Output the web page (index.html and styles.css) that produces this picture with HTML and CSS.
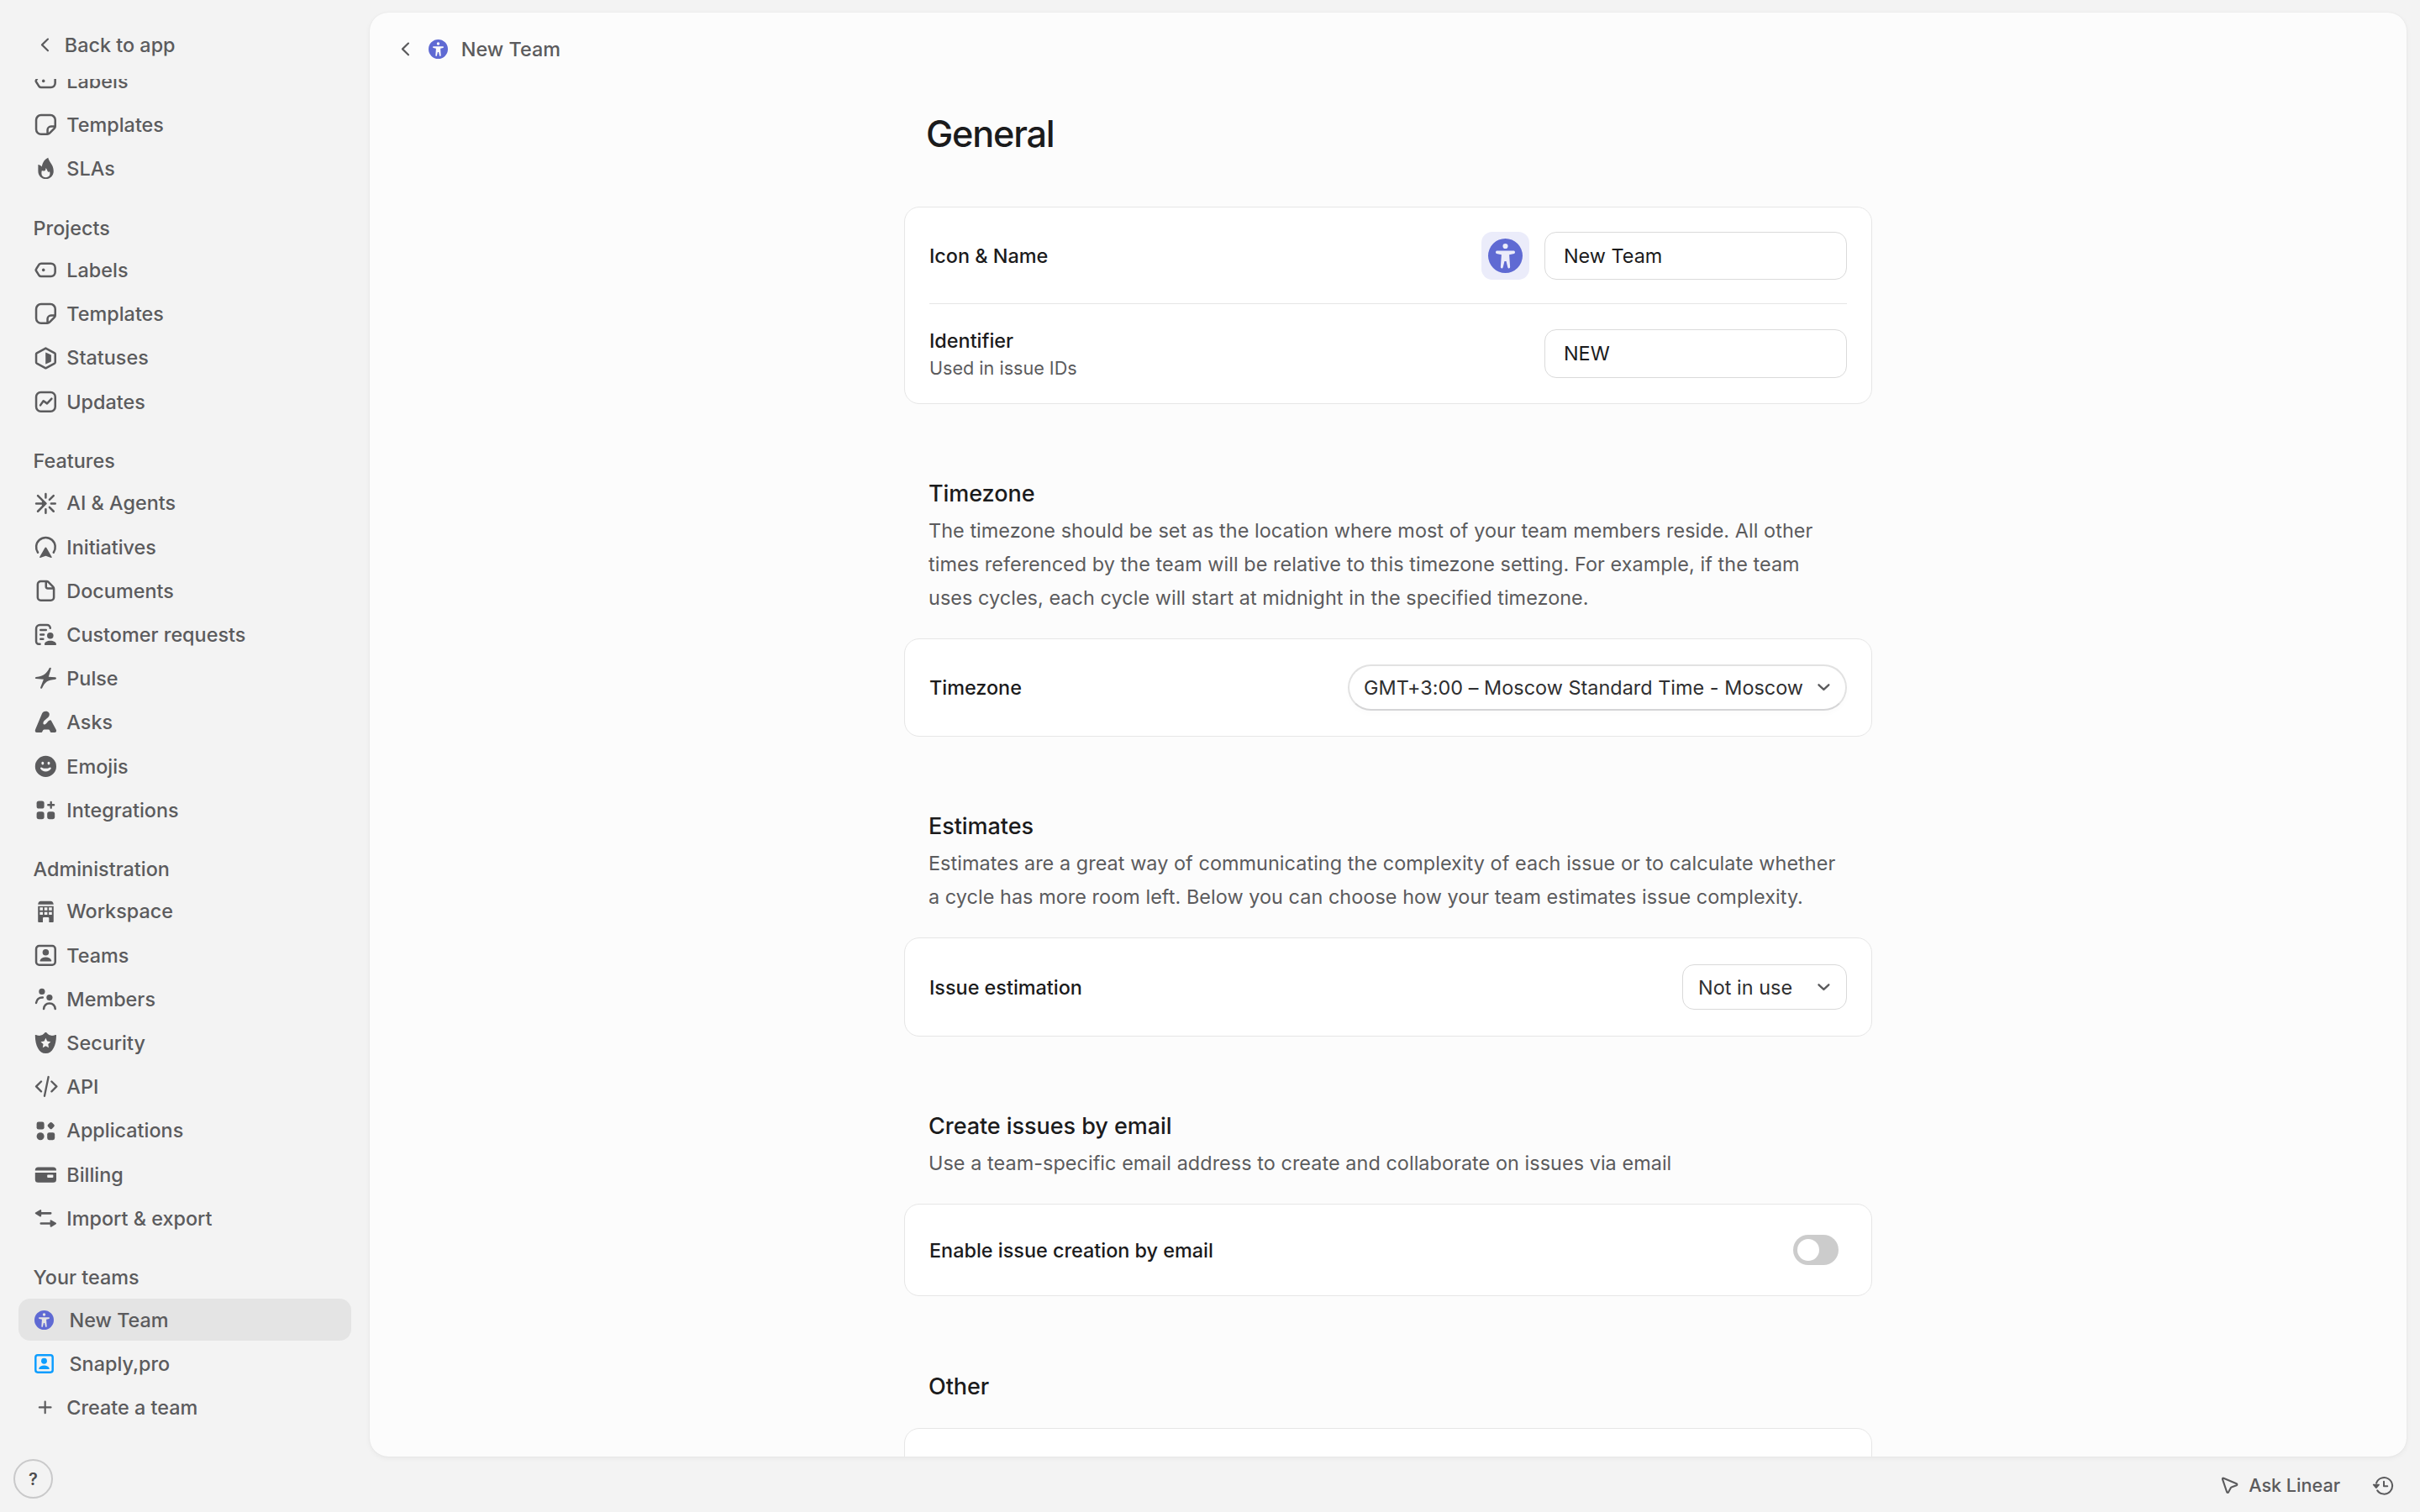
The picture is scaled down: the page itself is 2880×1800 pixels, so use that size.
FILE: index.html
```
<!DOCTYPE html>
<html lang="en">
<head>
    <meta charset="UTF-8">
    <meta name="viewport" content="width=device-width, initial-scale=1.0">
    <title>New Team</title>
    <link rel="stylesheet" href="styles.css">
</head>
<body>
    <!-- Icons used more than once -->
    <svg class="sprite" aria-hidden="true">
        <symbol id="i-label" viewBox="0 0 16 16"><path d="M5 3.75h6.5a2.75 2.75 0 0 1 2.75 2.75v3a2.75 2.75 0 0 1-2.75 2.75H5a1.8 1.8 0 0 1-1.4-.65L1.9 8.9a1.4 1.4 0 0 1 0-1.8l1.7-2.7A1.8 1.8 0 0 1 5 3.75Z" fill="none" stroke="currentColor" stroke-width="1.4"/><circle cx="6.5" cy="8" r="1" fill="currentColor"/></symbol>
        <symbol id="i-template" viewBox="0 0 16 16"><path d="M4.9 1.7h6.2a3.2 3.2 0 0 1 3.2 3.2v4.2c0 .5-.2 1-.6 1.4l-3.2 3.2c-.4.4-.9.6-1.4.6H4.9a3.2 3.2 0 0 1-3.2-3.2V4.9a3.2 3.2 0 0 1 3.2-3.2ZM14.1 9.2h-2.6a2.3 2.3 0 0 0-2.3 2.3v2.6" fill="none" stroke="currentColor" stroke-width="1.4"/></symbol>
        <symbol id="i-team" viewBox="0 0 16 16"><rect x="1.7" y="1.7" width="12.6" height="12.6" rx="2" fill="none" stroke="currentColor" stroke-width="1.4"/><circle cx="8" cy="6" r="2.1" fill="currentColor"/><path d="M4.2 11.4C4.6 9.9 6.2 9.2 8 9.2s3.4.7 3.8 2.2c.1.3-.1.6-.5.6H4.7c-.4 0-.6-.3-.5-.6Z" fill="currentColor"/></symbol>
        <symbol id="i-team-small" viewBox="1 1 14 14"><rect x="1.8" y="1.8" width="12.4" height="12.4" rx="1.6" fill="none" stroke="currentColor" stroke-width="1.5"/><circle cx="8" cy="6" r="2.1" fill="currentColor"/><path d="M4.2 11.4C4.6 9.9 6.2 9.2 8 9.2s3.4.7 3.8 2.2c.1.3-.1.6-.5.6H4.7c-.4 0-.6-.3-.5-.6Z" fill="currentColor"/></symbol>
        <symbol id="i-person" viewBox="0 0 16 16"><path fill-rule="evenodd" fill="currentColor" d="M8 0a8 8 0 1 1 0 16A8 8 0 0 1 8 0Zm0 2.3a1.2 1.2 0 1 0 0 2.4 1.2 1.2 0 0 0 0-2.4ZM4 5.7a.7.7 0 0 0-.1 1.3l2.3.5-.4 5.7c0 .8.9.9 1.1.2L7.6 10.5h.8l.7 2.9c.2.7 1.1.6 1.1-.2L9.8 7.5l2.3-.5a.7.7 0 0 0-.1-1.3Z"/></symbol>
        <symbol id="i-chevron" viewBox="0 0 16 16"><path d="M10 4.2 6.1 8l3.9 3.8" fill="none" stroke="currentColor" stroke-width="1.2" stroke-linecap="round" stroke-linejoin="round"/></symbol>
        <symbol id="i-down" viewBox="0 0 16 16"><path d="M4.7 6.3 8 9.4l3.3-3.1" fill="none" stroke="currentColor" stroke-width="1.3" stroke-linecap="round" stroke-linejoin="round"/></symbol>
    </svg>

    <aside class="sidebar">
        <a class="back"><svg class="icon"><use href="#i-chevron"/></svg>Back to app</a>

        <nav class="nav">
            <div class="nav-inner">
                <div class="group">
                    <a class="item"><svg class="icon"><use href="#i-label"/></svg>Labels</a>
                    <a class="item"><svg class="icon"><use href="#i-template"/></svg>Templates</a>
                    <a class="item"><svg class="icon" viewBox="0 0 16 16"><path fill-rule="evenodd" fill="currentColor" d="M9.6 1c.5 2.9 3.6 4.5 3.6 8.8C13.2 12.8 11 15 8.1 15S3 12.8 3 9.8V5.6c1 .2 1.9.7 2.4 1.3C6.2 3.5 7.6 1.9 9.6 1ZM8.1 7.8c-.1 1.5-.7 2.2-1.5 1.9-.5 0-.8-.1-1.2-.1-.7 3 .6 4.4 2.7 4.4s3.2-1.5 2.5-3.8c-.5.4-.9.3-1.2-.1-.4-.7-.6-1.5-1.3-2.3Z"/></svg>SLAs</a>
                </div>

                <div class="group">
                    <h3 class="group-title">Projects</h3>
                    <a class="item"><svg class="icon"><use href="#i-label"/></svg>Labels</a>
                    <a class="item"><svg class="icon"><use href="#i-template"/></svg>Templates</a>
                    <a class="item"><svg class="icon" viewBox="0 0 16 16"><path d="m8 1.4 5.9 3.2a.8.8 0 0 1 .4.7v5.4c0 .3-.1.5-.4.7L8 14.6l-5.9-3.2a.8.8 0 0 1-.4-.7V5.3c0-.3.1-.5.4-.7Z" fill="none" stroke="currentColor" stroke-width="1.4" stroke-linejoin="round"/><path d="M7.9 4.1 11.1 5.5c.3.2.5.4.5.7v3.6c0 .3-.2.5-.5.7l-3.2 1.4Z" fill="currentColor"/></svg>Statuses</a>
                    <a class="item"><svg class="icon" viewBox="0 0 16 16"><rect x="1.7" y="1.7" width="12.6" height="12.6" rx="3" fill="none" stroke="currentColor" stroke-width="1.4"/><path d="m4.5 10.2 2-2.8 2.4 1.7 3-3.2" fill="none" stroke="currentColor" stroke-width="1.4" stroke-linecap="round" stroke-linejoin="round"/></svg>Updates</a>
                </div>

                <div class="group">
                    <h3 class="group-title">Features</h3>
                    <a class="item"><svg class="icon" viewBox="0 0 16 16"><path d="M8 1.7v2.5M8 11.8v2.5M11.6 8h2.7M10.5 5.5l2.7-2.7M10.5 10.5l2.7 2.7M1.7 8H8L2.8 2.8M8 8l-5.2 5.2" fill="none" stroke="currentColor" stroke-width="1.4" stroke-linecap="round" stroke-linejoin="round"/><path d="M5.5 5.5 8.6 8l-3.1 2.5Z" fill="currentColor"/></svg>AI &amp; Agents</a>
                    <a class="item"><svg class="icon" viewBox="0 0 16 16"><path d="M2.8 11.5a6.3 6.3 0 1 1 10.4 0" fill="none" stroke="currentColor" stroke-width="1.4" stroke-linecap="round"/><path d="M7.5 8.4c.2-.5.8-.5 1 0l3.5 6c.2.4-.1.7-.5.6L8 13.8 4.5 15c-.4.1-.7-.2-.5-.6Z" fill="currentColor"/></svg>Initiatives</a>
                    <a class="item"><svg class="icon" viewBox="0 0 16 16"><path d="M4.7 1.7h3.8c.5 0 1 .2 1.4.6l3 3c.3.3.5.8.5 1.3v5.7a2 2 0 0 1-2 2H4.7a2 2 0 0 1-2-2V3.7a2 2 0 0 1 2-2ZM8.2 2v3.2c0 .7.5 1.2 1.2 1.2H13" fill="none" stroke="currentColor" stroke-width="1.4"/></svg>Documents</a>
                    <a class="item"><svg class="icon" viewBox="0 0 16 16"><path d="M4.2 14.3h-.9a1.6 1.6 0 0 1-1.6-1.6V4.1a2.4 2.4 0 0 1 2.4-2.4h4.8a2.1 2.1 0 0 1 2.1 2.1M4.6 5h3.6M4.6 8h2.1M4.6 11h1.7" fill="none" stroke="currentColor" stroke-width="1.4" stroke-linecap="round"/><circle cx="11" cy="8.8" r="2.1" fill="currentColor"/><path d="M7.2 14.6c0-1.6 1.7-2.5 3.8-2.5s4 .9 4 2.5c0 .3-.2.4-.4.4h-7c-.2 0-.4-.1-.4-.4Z" fill="currentColor"/></svg>Customer requests</a>
                    <a class="item"><svg class="icon" viewBox="0 0 16 16"><path d="M11.6 1.4c-.1-.6-.9-.6-1.2-.1C8.7 4.6 7 6.7 1.6 7.2c-.8.1-.8 1.1 0 1.2l5 .4-2.1 5.3c-.1.7.6 1.1 1.1.5C7.6 10.3 9 9.3 14.4 8.7c.8-.1.8-1.2 0-1.3L9.9 7.1Z" fill="currentColor"/></svg>Pulse</a>
                    <a class="item"><svg class="icon" viewBox="0 0 16 16"><path d="M8 1c1.9 0 3 1.5 2.2 3.1-.5 1.1-3.3 2.7-3.7 4-.4 1.3 0 1.8.9 1.6 1.3-.3 1.9-2.5 3.5-2.9.4-.1.7.2 1 .8l3 5.6c.4.9 0 1.8-1 1.8h-2c-1.4 0-.8-2-2.1-2H7.1c-1.4 0-.9 2-2.2 2H2.2C1.1 15 .7 14 1.2 12.9L5.5 2.6C5.9 1.6 6.8 1 8 1Z" fill="currentColor"/></svg>Asks</a>
                    <a class="item"><svg class="icon" viewBox="0 0 16 16"><path fill-rule="evenodd" fill="currentColor" d="M8 1a7 7 0 1 1 0 14A7 7 0 0 1 8 1ZM6 4.8c-.5 0-.8.4-.8 1s.3 1.1.8 1.1.8-.5.8-1.1-.3-1-.8-1Zm4 0c-.5 0-.8.4-.8 1s.3 1.1.8 1.1.8-.5.8-1.1-.3-1-.8-1ZM5.4 8.7c-.6-.3-1.2.2-.9.8C5.2 10.7 6.5 11.4 8 11.4s2.8-.7 3.5-1.9c.3-.6-.3-1.1-.9-.8-1.7.9-3.5.9-5.2 0Z"/></svg>Emojis</a>
                    <a class="item"><svg class="icon" viewBox="0 0 16 16"><g fill="currentColor"><rect x="2" y="2" width="5" height="5" rx="1.5"/><rect x="2" y="9" width="5" height="5" rx="1.5"/><rect x="9" y="9" width="5" height="5" rx="1.5"/></g><path d="M11.5 2.7v3.8M9.6 4.6h3.8" stroke="currentColor" stroke-width="1.3" stroke-linecap="round"/></svg>Integrations</a>
                </div>

                <div class="group">
                    <h3 class="group-title">Administration</h3>
                    <a class="item"><svg class="icon" viewBox="0 0 16 16"><path fill-rule="evenodd" fill="currentColor" d="M4.8 1h6.4c1.1 0 1.9.7 2 2.2H2.9C3 1.7 3.7 1 4.8 1ZM2.9 4.3h10.3v10.2c0 .3-.2.5-.5.5h-2.5v-2.7c0-.4-.2-.6-.6-.6H6.7c-.4 0-.6.2-.6.6V15H3.4c-.3 0-.5-.2-.5-.5ZM4.1 5.2v1.9h2V5.2Zm3 0v1.9h2V5.2Zm3 0v1.9h2V5.2Zm-6 3V10h2V8.2Zm3 0V10h2V8.2Zm3 0V10h2V8.2Z"/></svg>Workspace</a>
                    <a class="item"><svg class="icon"><use href="#i-team"/></svg>Teams</a>
                    <a class="item"><svg class="icon" viewBox="0 0 16 16"><g fill="currentColor"><circle cx="5.5" cy="3" r="2"/><circle cx="10.5" cy="7" r="2"/></g><path d="M1.7 10.5c.4-2.4 1.9-3.7 4.3-3.6M6.7 14.5c.3-2.5 1.7-3.7 3.8-3.7s3.5 1.2 3.8 3.7" fill="none" stroke="currentColor" stroke-width="1.4" stroke-linecap="round"/></svg>Members</a>
                    <a class="item"><svg class="icon" viewBox="0 0 16 16"><path fill-rule="evenodd" fill="currentColor" d="M7.5 1.3c.3-.3.7-.3 1 0 1.2 1.5 2.7 2.2 4.6 1.9.4 0 .9-.2 1.2-.4.4-.2.8 0 .7.5C14.9 9.7 12.6 15 8 15S1.1 9.7 1 3.3c-.1-.5.3-.7.7-.5.3.2.8.4 1.2.4 1.9.3 3.4-.4 4.6-1.9ZM8 4.8l-1 2.2-2.3.3 1.7 1.6L6 11.2l2-1.1 2 1.1-.4-2.3 1.7-1.6L9 7Z"/></svg>Security</a>
                    <a class="item"><svg class="icon" viewBox="0 0 16 16"><path d="M5 4.7 1.7 8 5 11.3M11.9 4.7 15.2 8l-3.3 3.3M9.8 1.7 7.2 14.3" fill="none" stroke="currentColor" stroke-width="1.3" stroke-linecap="round" stroke-linejoin="round"/></svg>API</a>
                    <a class="item"><svg class="icon" viewBox="0 0 16 16"><g fill="currentColor"><rect x="2" y="2" width="5" height="5" rx="1.3"/><rect x="9.6" y="2.6" width="3.8" height="3.8" rx="1" transform="rotate(45 11.5 4.5)"/><circle cx="4.5" cy="11.5" r="2.5"/><rect x="9" y="9" width="5" height="5" rx="1.3"/></g></svg>Applications</a>
                    <a class="item"><svg class="icon" viewBox="0 0 16 16"><path fill-rule="evenodd" fill="currentColor" d="M3 3h10a2 2 0 0 1 2 2v.3H1V5a2 2 0 0 1 2-2ZM1 6.6h14v4.6a2 2 0 0 1-2 2H3a2 2 0 0 1-2-2ZM9.5 8a.5.5 0 0 0-.5.5v1c0 .3.2.5.5.5h3c.3 0 .5-.2.5-.5v-1a.5.5 0 0 0-.5-.5Z"/></svg>Billing</a>
                    <a class="item"><svg class="icon" viewBox="0 0 16 16"><path d="M4 4.6h7.2M4.9 11.4H12" stroke="currentColor" stroke-width="1.5" stroke-linecap="round"/><path d="M1.2 4.2 4.3 2.3c.4-.2.8 0 .8.5v3.6c0 .5-.4.7-.8.5L1.2 5c-.3-.2-.3-.6 0-.8ZM14.8 11l-3.1-1.9c-.4-.2-.8 0-.8.5v3.6c0 .5.4.7.8.5l3.1-1.9c.3-.2.3-.6 0-.8Z" fill="currentColor"/></svg>Import &amp; export</a>
                </div>

                <div class="group">
                    <h3 class="group-title">Your teams</h3>
                    <a class="item team active"><svg class="icon team-purple"><use href="#i-person"/></svg>New Team</a>
                    <a class="item team"><svg class="icon team-blue"><use href="#i-team-small"/></svg>Snaply,pro</a>
                    <a class="item"><svg class="icon" viewBox="0 0 16 16"><path d="M7.6 4.2v7.6M3.8 8h7.6" stroke="currentColor" stroke-width="1.2" stroke-linecap="round"/></svg>Create a team</a>
                </div>
            </div>
        </nav>

        <button class="help">?</button>
    </aside>

    <div class="content">
        <main class="panel">
            <header class="topbar">
                <svg class="icon"><use href="#i-chevron"/></svg>
                <svg class="topbar-team"><use href="#i-person"/></svg>
                <span>New Team</span>
            </header>

            <div class="page">
                <h1>General</h1>

                <div class="card card-general">
                    <div class="row row-name">
                        <div class="label">Icon &amp; Name</div>
                        <div class="controls">
                            <button class="icon-button"><svg><use href="#i-person"/></svg></button>
                            <input class="field" type="text" value="New Team">
                        </div>
                    </div>
                    <div class="row row-id">
                        <div>
                            <div class="label">Identifier</div>
                            <div class="hint">Used in issue IDs</div>
                        </div>
                        <input class="field" type="text" value="NEW">
                    </div>
                </div>

                <section>
                    <h2>Timezone</h2>
                    <p>The timezone should be set as the location where most of your team members reside. All other times referenced by the team will be relative to this timezone setting. For example, if the team uses cycles, each cycle will start at midnight in the specified timezone.</p>
                    <div class="card card-timezone">
                        <div class="row">
                            <div class="label">Timezone</div>
                            <button class="select select-pill"><span>GMT+3:00 – Moscow Standard Time - Moscow</span><svg class="icon"><use href="#i-down"/></svg></button>
                        </div>
                    </div>
                </section>

                <section>
                    <h2>Estimates</h2>
                    <p>Estimates are a great way of communicating the complexity of each issue or to calculate whether a cycle has more room left. Below you can choose how your team estimates issue complexity.</p>
                    <div class="card card-estimates">
                        <div class="row">
                            <div class="label">Issue estimation</div>
                            <button class="select select-estimate"><span>Not in use</span><svg class="icon"><use href="#i-down"/></svg></button>
                        </div>
                    </div>
                </section>

                <section>
                    <h2>Create issues by email</h2>
                    <p>Use a team-specific email address to create and collaborate on issues via email</p>
                    <div class="card card-email">
                        <div class="row">
                            <div class="label">Enable issue creation by email</div>
                            <button class="toggle" aria-label="Enable issue creation by email"></button>
                        </div>
                    </div>
                </section>

                <section class="section-other">
                    <h2>Other</h2>
                    <div class="card card-other"></div>
                </section>
            </div>
        </main>

        <footer class="bottombar">
            <a class="ask"><svg viewBox="0 0 16 16"><path d="M1.5 2.2c-.2-.7.4-1.2 1-.9l11.7 5c.7.3.7 1.2 0 1.5L9.6 9.6c-.3.1-.5.3-.7.6l-2 3.7c-.3.7-1.3.6-1.5-.2Z" fill="none" stroke="currentColor" stroke-width="1.6" stroke-linejoin="round"/></svg>Ask Linear</a>
            <svg class="history" viewBox="0 0 16 16"><path d="M3 6.3a5.8 5.8 0 1 1 .7 5.2M8.3 5.2v3.2h2.5" fill="none" stroke="currentColor" stroke-width="1.2" stroke-linecap="round" stroke-linejoin="round"/><path d="M1 7.4h3.8L2.9 9.6Z" fill="currentColor" stroke="currentColor" stroke-linejoin="round"/></svg>
        </footer>
    </div>
</body>
</html>
```
FILE: styles.css
```
* {
    box-sizing: border-box;
}

body {
    display: flex;
    height: 100vh;
    margin: 0;
    overflow: hidden;
    background-color: #f3f3f3;
    color: #5b5b5d;
    font-family: Inter, sans-serif;
    font-size: 23.4px;
    font-weight: 500;
}

h1, h2, h3, p {
    margin: 0;
}

button, input {
    font: inherit;
    margin: 0;
}

.sprite {
    display: none;
}

.icon {
    width: 28.8px;
    height: 28.8px;
    flex-shrink: 0;
}

/* Sidebar */
.sidebar {
    display: flex;
    flex-direction: column;
    width: 440px;
    flex-shrink: 0;
    padding: 14px 22px 16px;
}

.back {
    display: flex;
    align-items: center;
    gap: 9px;
    height: 80px;
    padding: 0 0 1px 17px;
}

.nav {
    flex: 1;
    min-height: 0;
    overflow: hidden;
}

/* The list is scrolled down, so the first row is partly hidden */
.nav-inner {
    margin-top: -22.8px;
}

.group + .group {
    margin-top: 20px;
}

.group-title {
    height: 50.4px;
    line-height: 50.4px;
    padding: 0.7px 0 0 17.6px;
    font-size: inherit;
    font-weight: 500;
}

.item {
    display: flex;
    align-items: center;
    gap: 10.5px;
    height: 50.4px;
    padding-left: 18px;
    border-radius: 14px;
}

.item + .item {
    margin-top: 1.8px;
}

.team {
    gap: 18.5px;
    padding-left: 19px;
}

.team .icon {
    width: 23px;
    height: 23px;
}

.active {
    background-color: #e4e4e4;
}

.team-purple {
    color: #5f6ad3;
}

.team-blue {
    color: #0c9dff;
}

.help {
    width: 47px;
    height: 47px;
    margin-left: -6px;
    padding: 0;
    border: 2px solid #c9c9ca;
    border-radius: 50%;
    background: none;
    color: #4d4d4f;
    font-size: 20px;
    font-weight: 600;
}

/* Main panel */
.content {
    flex: 1;
    display: flex;
    flex-direction: column;
    padding: 15px 16px 0 0;
}

.panel {
    height: 1719px;
    flex-shrink: 0;
    overflow: hidden;
    border-radius: 22px;
    background-color: #fcfcfc;
    box-shadow: 0 0 2px rgba(0, 0, 0, 0.06), 0 2px 6px rgba(0, 0, 0, 0.05);
}

.topbar {
    display: flex;
    align-items: center;
    height: 87px;
    padding-left: 28px;
}

.topbar-team {
    width: 23px;
    height: 23px;
    margin: 0 16px 0 13px;
    color: #5f6ad3;
}

.page {
    width: 1152px;
    margin: 0 auto;
}

h1 {
    height: 60px;
    margin: 27px 0 57px;
    padding-left: 26px;
    color: #1b1b1c;
    font-size: 43.2px;
    font-weight: 500;
    line-height: 60px;
    letter-spacing: -1.2px;
}

section {
    margin-top: 87px;
}

.section-other {
    margin-top: 88px;
}

h2 {
    padding-left: 29px;
    color: #1b1b1c;
    font-size: 27px;
    font-weight: 500;
    line-height: 40px;
    letter-spacing: -0.05px;
}

p {
    margin: 4px 36px 28px 29px;
    font-weight: 400;
    line-height: 40px;
    letter-spacing: 0.06px;
}

.card {
    padding: 0 29px;
    border: 1px solid #e6e6e6;
    border-radius: 18px;
    background-color: #fff;
}

.row {
    display: flex;
    align-items: center;
    justify-content: space-between;
    height: 100%;
}

.card-general {
    height: 235px;
}

.card-timezone {
    height: 117px;
}

.card-estimates {
    height: 118px;
}

.card-email {
    height: 110px;
}

.card-other {
    height: 118px;
    margin-top: 29px;
}

.row-name {
    height: 115px;
    border-bottom: 1px solid #e6e6e6;
}

.row-id {
    height: 118px;
}

.label {
    padding-top: 2px;
    color: #1b1b1c;
    line-height: 32px;
}

.card-timezone .label {
    padding-top: 0;
}

.hint {
    font-size: 21.6px;
    font-weight: 400;
    line-height: 32px;
}

.controls {
    display: flex;
    gap: 18px;
}

.field {
    width: 360px;
    height: 57px;
    padding: 0 22px;
    border: 1px solid #dadada;
    border-radius: 14px;
    outline: none;
    background-color: #fff;
    color: #1b1b1c;
    font-weight: 400;
}

.row-id .field {
    height: 58px;
    padding-bottom: 2px;
}

.icon-button {
    display: flex;
    align-items: center;
    justify-content: center;
    width: 57px;
    height: 57px;
    padding: 0;
    border: none;
    border-radius: 13px;
    background-color: #ebecfa;
    color: #5f6ad3;
}

.icon-button svg {
    width: 41px;
    height: 41px;
}

.select {
    display: flex;
    align-items: center;
    justify-content: space-between;
    height: 54px;
    padding: 0 12px 0 18px;
    border: 1px solid #d9d9d9;
    border-radius: 14px;
    background-color: #fff;
    color: #2f2f31;
    font-weight: 400;
    letter-spacing: 0.03px;
}

.select .icon {
    color: #5b5b5d;
}

.select-pill {
    width: 594px;
    height: 55px;
    padding: 0 11px 0 17px;
    border: 2px solid #e2e2e2;
    border-bottom-color: #d5d5d6;
    border-radius: 28px;
    box-shadow: 0 4px 6px rgba(0, 0, 0, 0.015);
}

.select-estimate {
    width: 196px;
}

.toggle {
    width: 54px;
    height: 36px;
    margin-right: 10px;
    padding: 5px;
    border: none;
    border-radius: 18px;
    background-color: #ccc;
}

.toggle::before {
    content: "";
    display: block;
    width: 26px;
    height: 26px;
    border-radius: 50%;
    background-color: #fff;
}

/* Bottom bar */
.bottombar {
    display: flex;
    align-items: center;
    justify-content: flex-end;
    gap: 38px;
    height: 66px;
    padding: 2px 14px 0 0;
}

.ask {
    display: flex;
    align-items: center;
    gap: 12px;
    font-size: 21.6px;
    font-weight: 500;
}

.ask svg {
    width: 21px;
    height: 21px;
}

.history {
    width: 27px;
    height: 27px;
}
```
